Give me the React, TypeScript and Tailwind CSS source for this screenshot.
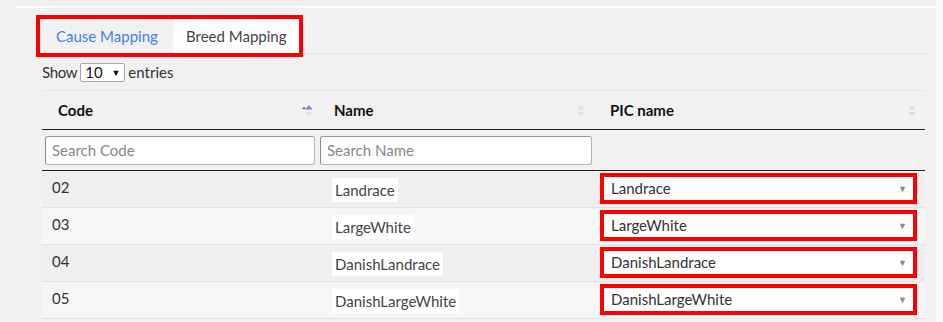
import React from 'react';

const ROWS = [
  { code: '02', name: 'Landrace', pic: 'Landrace' },
  { code: '03', name: 'LargeWhite', pic: 'LargeWhite' },
  { code: '04', name: 'DanishLandrace', pic: 'DanishLandrace' },
  { code: '05', name: 'DanishLargeWhite', pic: 'DanishLargeWhite' },
];

function SortIcon({ active }: { active?: boolean }) {
  return (
    <svg width="11" height="15" viewBox="0 0 11 15">
      {active && <path d="M0 6 L2 4 L4 6 Z" fill="#555" />}
      <path d="M3.5 6.5 L7 2 L10.5 6.5 Z" fill={active ? '#7a7ae0' : '#dcdcdc'} />
      <path d="M3.5 9 L7 13.5 L10.5 9 Z" fill="#dcdcdc" />
    </svg>
  );
}

export default function App() {
  return (
    <div className="w-[943px] h-[322px] bg-[#fafafa] overflow-hidden flex text-[15px] text-[#333]" style={{ fontFamily: 'Lato, "Open Sans", sans-serif' }}>
      <div className="w-[936px] h-full bg-[#f1f1f1] pt-[6px]">
        <div className="ml-[16px] h-[2px] bg-white" />

        {/* Tabs */}
        <div className="ml-[40px] mt-[11px] w-[886px] border-b border-[#e2e2e2] flex">
          <div className="flex h-[34px] outline-4 outline-[#ff0000]">
            <div className="w-[133px] flex items-center pl-[16px] text-[#3b82f0]">Cause Mapping</div>
            <div className="w-[126px] flex items-center pl-[13px] bg-white text-[#444]">Breed Mapping</div>
          </div>
        </div>

        {/* Show entries */}
        <div className="ml-[42px] mt-[9px] h-[19px] flex items-center gap-[3px] text-[#333]">
          <span className="tracking-[-0.3px]">Show</span>
          <div className="w-[45px] h-[19px] border border-[#a9a9a9] rounded-[2px] bg-white flex items-center justify-between px-[4px]">
            <span className="text-[#111]">10</span>
            <span className="text-[9px] text-[#111]">▼</span>
          </div>
          <span>entries</span>
        </div>

        {/* Table */}
        <div className="ml-[42px] mt-[8px] w-[883px]">
          <div className="flex h-[40px] border-t border-[#e6e6e6] border-b border-b-[#222] font-bold text-[#111]">
            <div className="w-[276px] flex items-center justify-between pl-[16px] pr-[5px]">
              <span>Code</span>
              <SortIcon active />
            </div>
            <div className="w-[276px] flex items-center justify-between pl-[16px] pr-[9px]">
              <span>Name</span>
              <SortIcon />
            </div>
            <div className="w-[331px] flex items-center justify-between pl-[16px] pr-[9px]">
              <span>PIC name</span>
              <SortIcon />
            </div>
          </div>

          <div className="flex h-[41px] items-center border-b border-[#222]">
            <div className="w-[276px] px-[3px]">
              <div className="h-[29px] bg-white border border-[#b5b5b5] border-l-[#888] border-t-[#999] rounded-[3px] flex items-center pl-[6px] text-[#888]">Search Code</div>
            </div>
            <div className="w-[276px] px-[2px]">
              <div className="h-[29px] bg-white border border-[#b5b5b5] border-l-[#888] border-t-[#999] rounded-[3px] flex items-center pl-[6px] text-[#888]">Search Name</div>
            </div>
            <div className="w-[331px]" />
          </div>

          {ROWS.map((r, i) => (
            <div key={r.code} className={`flex h-[37px] border-b border-[#e2e2e2] ${i % 2 === 0 ? 'bg-[#efefef]' : 'bg-[#f6f6f6]'}`}>
              <div className="w-[276px] pl-[10px] pt-[5px]">{r.code}</div>
              <div className="w-[276px] flex items-center pl-[14px] pt-[2px]">
                <span className="bg-white px-[3px] py-[1px] text-[#444]">{r.name}</span>
              </div>
              <div className="w-[331px] pl-[6px] pt-[2px]">
                <div className="w-[317px] h-[31px] border-4 border-[#ff0000] bg-white flex items-center justify-between pl-[7px] pr-[6px] text-[#333]">
                  <span>{r.pic}</span>
                  <span className="text-[9px] text-[#888]">▼</span>
                </div>
              </div>
            </div>
          ))}
        </div>
      </div>
    </div>
  );
}
